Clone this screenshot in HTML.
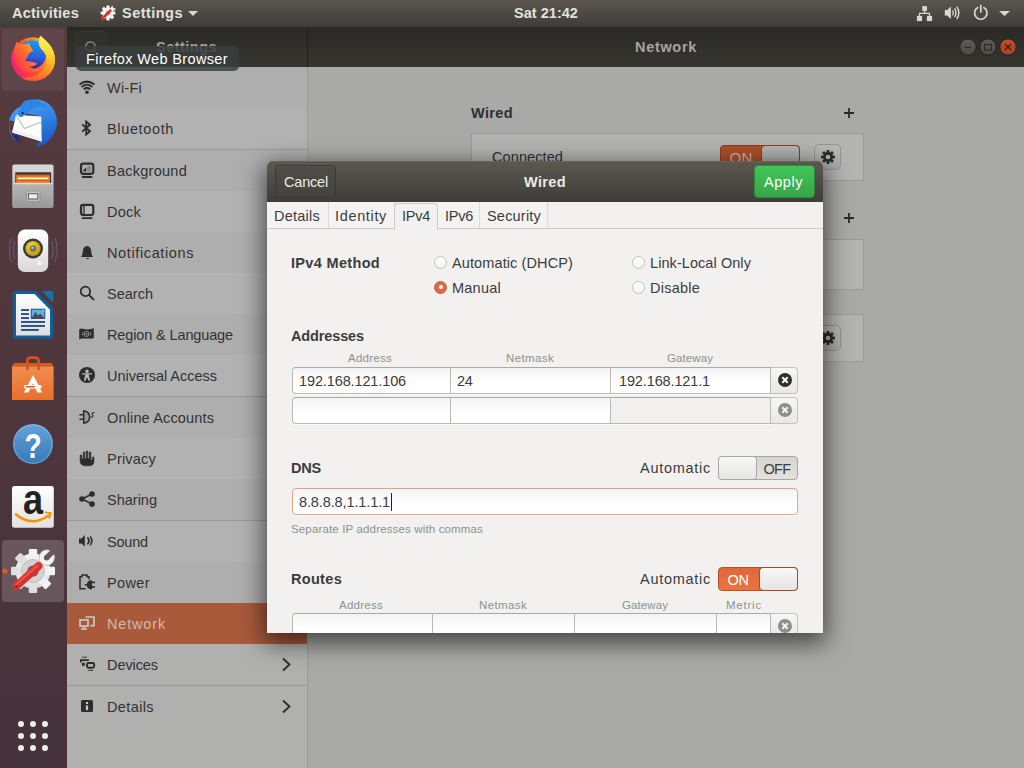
<!DOCTYPE html>
<html lang="en"><head>
<meta charset="utf-8">
<title>Settings - Network</title>
<style>
*{box-sizing:border-box;margin:0;padding:0}
html,body{width:1024px;height:768px;overflow:hidden;background:#a9a9a7;font-family:"Liberation Sans",sans-serif;font-size:14.5px;color:#3c3c3c}
.t{position:absolute;white-space:nowrap;line-height:20px;height:20px}
.b{font-weight:bold}
svg{position:absolute;overflow:visible}
/* top bar */
#topbar{position:absolute;left:0;top:0;width:1024px;height:27px;background:linear-gradient(#5a564d,#3e3d39);color:#e2e1dc;font-weight:bold}
#topbar .t{top:3px}
/* dock */
#dock{position:absolute;left:0;top:27px;width:67px;height:741px;background:linear-gradient(#563b3f,#45323a)}
.hl{position:absolute;left:2px;width:62px;height:62px;border-radius:4px}
/* main window */
#hdr{position:absolute;left:67px;top:27px;width:957px;height:40px;background:linear-gradient(#2a2925,#363530);color:#a6a59f;font-weight:bold}
#hdr .t{top:10px}
#side{position:absolute;left:67px;top:67px;width:240px;height:701px;background:#b0b0af}
#sideborder{position:absolute;left:307px;top:67px;width:1px;height:701px;background:#9c9c9a}
.row{position:absolute;left:0;width:240px;height:41px}
.row.l{background:#b2b2b2}
.row.d{background:#aeaeae}
.row .t{left:40px;top:11px;color:#323232}
.row svg{left:12px;top:12px;width:16px;height:16px}
.sep{position:absolute;left:0;width:240px;height:1px;background:#989896}
.row.sel{background:#a95a3b}
.row.sel .t{color:#d2b8ac}
/* content */
#content{position:absolute;left:308px;top:67px;width:716px;height:701px}
.card{position:absolute;left:163px;width:393px;border:1px solid #9a9a98;background:#b3b3b2}
.gearbtn{position:absolute;width:27px;height:26px;border:1px solid #939391;border-radius:5px;background:linear-gradient(#b8b8b7,#a9a9a8)}
/* tooltip */
#tip{position:absolute;left:76px;top:46px;width:163px;height:25px;border-radius:5px;background:rgba(57,62,62,.83);color:#fff}
/* dialog */
#dlg{position:absolute;left:267px;top:161px;width:556px;height:472px;background:#f2f1f0;border-radius:5px 5px 0 0;box-shadow:0 7px 24px 3px rgba(0,0,0,.6);overflow:hidden}
#dhdr{position:absolute;left:0;top:0;width:556px;height:41px;background:linear-gradient(#5b594f,#3e3d38);box-shadow:inset 0 1px #66645a;border-radius:5px 5px 0 0;color:#ecebe6}
.btn{position:absolute;top:4px;width:61px;height:33px;border-radius:4px}
#cancel{left:8px;border:1px solid #3a3934;background:linear-gradient(#4e4c45,#45433d);box-shadow:inset 0 1px rgba(255,255,255,.06)}
#apply{left:487px;border:1px solid #2f8a3d;background:linear-gradient(#40c657,#37a549)}
#tabs{position:absolute;left:0;top:41px;width:556px;height:27px;background:#f2f1f0;border-bottom:1px solid #cdccc9}
.tab{position:absolute;top:0;height:26px;border-right:1px solid #dddcd9;background:#f4f3f2}
.tab.act{top:1px;height:27px;background:#f2f1f0;border:1px solid #cdccc9;border-bottom:none;border-radius:4px 4px 0 0}
.tab .t{top:4px}
#dlg .t{color:#3c3c3c}
#dlg #dhdr .t{color:#ecebe6}
#dlg .h{color:#3c3c3c;font-weight:bold}
.radio{position:absolute;width:13px;height:13px;border-radius:50%;border:1px solid #c2c1bd;background:linear-gradient(#fff,#f3f3f2)}
.radio.on{border-color:#c4603c;background:#dc6a42}
.radio.on:after{content:"";position:absolute;left:3.5px;top:3.5px;width:4px;height:4px;border-radius:50%;background:#fff}
.colh{position:absolute;font-size:11.5px;color:#8d918b;white-space:nowrap;line-height:14px;text-align:center}
.entry{position:absolute;height:27px;border:1px solid #b9b8b4;border-top-color:#a9a8a4;box-shadow:0 1px 0 #fbfbfb;background:linear-gradient(#f4f4f4,#fff 60%);}
.entry.dis{background:#f2f1f0}
.entry .t{top:3px;left:6px}
.del{position:absolute;width:27px;height:27px;border:1px solid #c3c2bf;border-left:none;border-radius:0 4px 4px 0;background:linear-gradient(#f6f6f5,#e9e8e6)}
.switch{position:absolute;width:80px;height:24px;border-radius:4px}

.switch.off{border:1px solid #a8a7a3;background:linear-gradient(#d6d5d2,#e3e2df)}
.switch.on{border:1px solid #b4502a;background:linear-gradient(#e0673a,#ec733f)}
.knob{position:absolute;top:-1px;width:39px;height:24px;border-radius:4px;border:1px solid #a8a7a3;background:linear-gradient(#f8f8f7,#e6e5e3)}
.switch.on .knob{border-color:#a4492a}
.entry.dns{border-color:#e8a387;background:linear-gradient(#f4f4f4,#fff 60%)}
.caret{position:absolute;left:98px;top:4px;width:1px;height:18px;background:#222}
</style>
</head>
<body>
<div id="topbar">
  <svg style="left:100px;top:5px;width:16px;height:16px" viewBox="-8 -8 16 16"><g fill="#f4f4f4"><circle r="5.6"></circle><rect x="-1.6" y="-7.4" width="3.2" height="14.8" rx=".6"></rect><rect x="-1.6" y="-7.4" width="3.2" height="14.8" rx=".6" transform="rotate(45)"></rect><rect x="-1.6" y="-7.4" width="3.2" height="14.8" rx=".6" transform="rotate(90)"></rect><rect x="-1.6" y="-7.4" width="3.2" height="14.8" rx=".6" transform="rotate(135)"></rect></g><circle r="2" fill="#777"></circle><path d="M-6 6L2.5 -2.5" stroke="#d8302a" stroke-width="2.6" stroke-linecap="round"></path><path d="M3 -3.2C2.2 -5 3.2 -6.8 5 -7L4.8 -5L6 -4.2L7.4 -5C7.8 -3.4 6.4 -2 4.6 -2.2Z" fill="#fff" stroke="#aaa" stroke-width=".3"></path></svg>
  <svg style="left:188px;top:11px;width:10px;height:5px" viewBox="0 0 10 5"><path d="M0 0H10L5 5Z" fill="#d8d7d3"></path></svg>
  <svg style="left:916px;top:5px;width:17px;height:17px" viewBox="916 5 17 17"><g fill="#d8d7d3"><rect x="922.2" y="6.1" width="4.8" height="4.8"></rect><rect x="916.9" y="15.9" width="5.2" height="5.2"></rect><rect x="926.9" y="15.9" width="5.2" height="5.2"></rect></g><path d="M924.6 10.9V13.4M919.5 15.9V13.4H929.5V15.9" fill="none" stroke="#d8d7d3" stroke-width="1.2"></path></svg>
  <svg style="left:944px;top:5px;width:17px;height:17px" viewBox="944 5 17 17"><path d="M944.8 10H947.2L950.9 6.6V19L947.2 15.6H944.8Z" fill="#d8d7d3"></path><path d="M952.6 10.2Q954 12.8 952.6 15.4" fill="none" stroke="#d8d7d3" stroke-width="1.3"></path><path d="M954.6 8.4Q957.2 12.8 954.6 17.2" fill="none" stroke="#d8d7d3" stroke-width="1.4"></path><path d="M956.8 6.6Q960.8 12.8 956.8 19" fill="none" stroke="#d8d7d3" stroke-width="1.5"></path></svg>
  <svg style="left:973px;top:4px;width:17px;height:18px" viewBox="973 4 17 18"><path d="M977.8 7.6A6.2 6.2 0 1 0 983.8 7.6" fill="none" stroke="#d8d7d3" stroke-width="1.7" stroke-linecap="round"></path><path d="M980.8 5.4V12" stroke="#d8d7d3" stroke-width="1.7" stroke-linecap="round"></path></svg>
  <svg style="left:999px;top:11px;width:11px;height:5px" viewBox="0 0 11 5"><path d="M0 0H11L5.5 5Z" fill="#d8d7d3"></path></svg>

  <span class="t" style="left: 12px; letter-spacing: 0.25px;">Activities</span>
  <span class="t" style="left: 122px; letter-spacing: 0.47px;">Settings</span>
  <span class="t" style="left: 514px; letter-spacing: 0.03px;">Sat 21:42</span>
</div>
<div id="dock">
<div class="hl" style="top:1.5px;background:rgba(255,255,255,.06)"></div>
<div class="hl" style="top:513px;background:rgba(255,255,255,.17)"></div>
<svg style="left:0;top:0;width:67px;height:741px" viewBox="0 27 67 741">
<defs>
<linearGradient id="ffb" gradientUnits="userSpaceOnUse" x1="53" y1="48" x2="12" y2="68"><stop offset="0" stop-color="#ffc02a"></stop><stop offset=".3" stop-color="#ff8a22"></stop><stop offset=".58" stop-color="#ff4a30"></stop><stop offset=".85" stop-color="#ff2d58"></stop><stop offset="1" stop-color="#e8208a"></stop></linearGradient>
<linearGradient id="ffg" x1=".5" y1="0" x2=".4" y2="1"><stop offset="0" stop-color="#1a9bf0"></stop><stop offset=".55" stop-color="#2a62e0"></stop><stop offset="1" stop-color="#3a1f9e"></stop></linearGradient>
<linearGradient id="fff" gradientUnits="userSpaceOnUse" x1="46" y1="36" x2="40" y2="81"><stop offset="0" stop-color="#fff56e"></stop><stop offset=".4" stop-color="#ffd42e"></stop><stop offset=".72" stop-color="#ff9c20"></stop><stop offset="1" stop-color="#ff5a2c"></stop></linearGradient><linearGradient id="ffh" gradientUnits="userSpaceOnUse" x1="13" y1="60" x2="34" y2="46"><stop offset="0" stop-color="#ff3850"></stop><stop offset=".5" stop-color="#ff6a2c"></stop><stop offset="1" stop-color="#ffa62a"></stop></linearGradient>

<linearGradient id="tbb" x1=".3" y1="0" x2=".7" y2="1"><stop offset="0" stop-color="#4ba4f2"></stop><stop offset=".6" stop-color="#2b7adf"></stop><stop offset="1" stop-color="#1f56ba"></stop></linearGradient>
<linearGradient id="gr1" x1="0" y1="0" x2="0" y2="1"><stop offset="0" stop-color="#dcdcdc"></stop><stop offset="1" stop-color="#a0a0a0"></stop></linearGradient>
<linearGradient id="gr2" x1="0" y1="0" x2="0" y2="1"><stop offset="0" stop-color="#b6b6b6"></stop><stop offset="1" stop-color="#989898"></stop></linearGradient>
<linearGradient id="rb" x1="0" y1="0" x2="0" y2="1"><stop offset="0" stop-color="#ffffff"></stop><stop offset="1" stop-color="#d8d8d8"></stop></linearGradient>
<radialGradient id="rby" cx=".4" cy=".35" r=".7"><stop offset="0" stop-color="#f0d838"></stop><stop offset="1" stop-color="#b8960e"></stop></radialGradient>
<linearGradient id="lo" x1="0" y1="0" x2="0" y2="1"><stop offset="0" stop-color="#ffffff"></stop><stop offset="1" stop-color="#dedede"></stop></linearGradient>
<linearGradient id="us" x1="0" y1="0" x2="0" y2="1"><stop offset="0" stop-color="#f28d50"></stop><stop offset="1" stop-color="#e8702c"></stop></linearGradient>
<linearGradient id="hp" x1="0" y1="0" x2="0" y2="1"><stop offset="0" stop-color="#64a2da"></stop><stop offset="1" stop-color="#3779b6"></stop></linearGradient>
<linearGradient id="am" x1="0" y1="0" x2="0" y2="1"><stop offset="0" stop-color="#ffffff"></stop><stop offset="1" stop-color="#e2e2e2"></stop></linearGradient>
<linearGradient id="gw" x1="0" y1="0" x2="0" y2="1"><stop offset="0" stop-color="#f6f6f6"></stop><stop offset="1" stop-color="#dcdcdc"></stop></linearGradient>
<linearGradient id="wr" x1="0" y1="0" x2="1" y2="1"><stop offset="0" stop-color="#f0483c"></stop><stop offset="1" stop-color="#c8201e"></stop></linearGradient>
<linearGradient id="cl" x1="0" y1="0" x2="0" y2="1"><stop offset="0" stop-color="#c24d2d"></stop><stop offset="1" stop-color="#a64026"></stop></linearGradient><linearGradient id="mn" x1="0" y1="0" x2="0" y2="1"><stop offset="0" stop-color="#5c5b55"></stop><stop offset="1" stop-color="#4c4b46"></stop></linearGradient></defs>
<!-- firefox -->
<g>
<circle cx="33" cy="59" r="21.8" fill="url(#ffb)"></circle>
<circle cx="32" cy="54.4" r="14.2" fill="url(#ffg)"></circle>
<path d="M16.6 41.4C18.5 43.5 21 44.4 24 44.2C26 44 28 43.6 29.4 43.6C29.6 45.6 31 47.6 33.2 50.6L28.6 53.4C28.4 55 27.8 56.8 26.4 58.2C25.6 59.4 25.4 60.6 25.8 61.6C29 60.8 33 61.6 37.2 63.8C35 65.8 32.5 67 29.5 66.6C32 68.8 36 70 40.5 69C34 74 24 73 18 67C13 61 13 50 16.6 41.4Z" fill="url(#ffh)"></path>
<path d="M40.3 35.8C46 40 55.6 48 55 61.5C54.4 72 45 81 33 80.8C28 80.8 24 79.5 21 77.5C30 79 41 75 45.5 66C48 60 46.5 54.5 42.5 50.5C39 47 37 42 40.3 35.8Z" fill="url(#fff)"></path>
</g>
<!-- thunderbird -->
<g>
<path d="M20.5 106.5C27 98 41 97 49.5 104.5C58.5 112.5 59.5 127 52 137C48 142.5 42 146.5 35 146.8C38 144.5 40.5 141.5 41.5 138L41.6 116.6L24 113C21.5 116 17 117 15.5 121C11 122 9 118 9.2 123C9.5 132 12 138 17 142.5C11 138.5 8.5 131 9 122C9.5 115.5 14 109.5 20.5 106.5Z" fill="url(#tbb)"></path>
<path d="M16 114.8L41.4 116.6L41.6 141.4L12.2 132.4Z" fill="#fdfdfd"></path>
<path d="M16 115L24.5 128.5L41.5 122" fill="none" stroke="#9a9a9a" stroke-width=".8"></path>
<path d="M12.2 132.4L41.6 141.4L41.6 137.5L12.8 129.5Z" fill="#efeff3"></path>
<path d="M13 134C14.5 138.5 17.5 141.5 21 143.5C19.5 141 18.8 138.5 18.6 135.8Z" fill="#1b2f8c"></path>
<path d="M24.5 101C32 98 44 100 50 110C46 106 40 105 35.5 107.5C30 110.5 27 113.5 22.5 116.5C19.5 118.5 17.5 115.5 18.5 112C19.5 108 21.5 103.5 24.5 101Z" fill="#2c86e6"></path>
<circle cx="22.6" cy="113.2" r="1.1" fill="#1a1a2a"></circle>
</g>
<!-- files -->
<g>
<rect x="12.3" y="164.6" width="41.2" height="43.4" rx="2" fill="url(#gr1)"></rect>
<rect x="13.3" y="165.4" width="39.2" height="5.6" rx="1.5" fill="#d6d6d6"></rect>
<rect x="15.3" y="172.3" width="35.8" height="11" fill="#353535"></rect>
<rect x="16.2" y="174.8" width="33.8" height="8.5" fill="#f08a2c"></rect>
<rect x="16.2" y="174.8" width="33.8" height="1.8" fill="#e0661a"></rect>
<rect x="18" y="177.6" width="30" height="1.5" fill="#fff3e0"></rect>
<rect x="16.2" y="180" width="33.8" height="1.2" fill="#d85a18"></rect>
<rect x="13.8" y="183" width="38.4" height="25" rx="1" fill="url(#gr2)"></rect>
<rect x="13.8" y="183" width="38.4" height="1.2" fill="#dedede"></rect>
<rect x="26.3" y="191" width="13.6" height="10.4" rx="1.6" fill="#c6c6c6" stroke="#8c8c8c" stroke-width=".8"></rect>
<rect x="28.4" y="193.8" width="9.4" height="5.2" fill="#eeeeee" stroke="#4a4a4a" stroke-width=".9"></rect>
</g>
<!-- rhythmbox -->
<g>
<path d="M11.5 238Q7.5 249 11.5 262M55 238Q59 249 55 262M14.8 241Q12 249 14.8 259M51.6 241Q54.4 249 51.6 259" fill="none" stroke="#8090c0" stroke-opacity=".35" stroke-width="1.3"></path>
<rect x="17.8" y="229.6" width="30.4" height="42.4" rx="7" fill="url(#rb)"></rect>
<circle cx="33" cy="248.5" r="10" fill="#3a3a34"></circle>
<circle cx="33" cy="248.5" r="7.6" fill="url(#rby)"></circle>
<circle cx="33" cy="248.5" r="3.2" fill="#70706c"></circle>
<circle cx="32.4" cy="247.8" r="1.3" fill="#bdbdbd"></circle>
<circle cx="39.5" cy="263" r="3" fill="#f4f4f4" stroke="#d0d0d0" stroke-width=".7"></circle>
</g>
<!-- libreoffice writer -->
<g>
<path d="M14.8 290.9H36L53.1 308.5V336.7Q53.1 338.7 51.1 338.7H14.8Q12.8 338.7 12.8 336.7V292.9Q12.8 290.9 14.8 290.9Z" fill="#0f6096"></path>
<path d="M16 294H34.6L50 309.8V335.6H16Z" fill="url(#lo)"></path>
<path d="M41.6 290.9H51.5Q53.1 290.9 53.1 292.5V302.8Z" fill="#1a6fa8"></path>
<g fill="#0c3f7c"><rect x="21" y="309.2" width="8" height="1.7"></rect><rect x="21" y="313.2" width="8" height="1.7"></rect><rect x="21" y="317.2" width="8" height="1.7"></rect><rect x="21" y="321.1" width="24" height="1.7"></rect><rect x="21" y="325.1" width="24" height="1.7"></rect><rect x="21" y="329.1" width="17.8" height="1.7"></rect></g>
<rect x="31.2" y="309.2" width="13.6" height="9.2" fill="#5cb2e8" stroke="#0c3f7c" stroke-width=".9"></rect>
<path d="M31.8 317.9L35.5 312L38 315.5L40.5 313.8L44.2 317.9Z" fill="#4e4a48"></path>
<path d="M42 309.7H44.3V312Z" fill="#f2c81e"></path>
</g>
<!-- ubuntu software -->
<g>
<path d="M14 363H51.6L53.6 366.6H12Z" fill="#d65c1c"></path>
<rect x="12" y="366.4" width="41.6" height="33.6" fill="url(#us)"></rect>
<path d="M27.4 370V361.2Q27.4 357.6 31 357.6H35Q38.6 357.6 38.6 361.2V370" fill="none" stroke="#d8521c" stroke-width="2.6"></path>
<path d="M33.2 375L42 392.5H37.3L33.2 383.2L28.2 392.5H23.9Z" fill="#fff"></path>
<rect x="23.8" y="385" width="18" height="3.6" rx="1.8" fill="#fff"></rect>
<rect x="25.3" y="386.1" width="10" height="1.4" rx=".7" fill="#e8601e"></rect>
</g>
<!-- help -->
<g>
<circle cx="33" cy="444" r="20" fill="url(#hp)"></circle>
<circle cx="33" cy="444" r="19.2" fill="none" stroke="#fff" stroke-opacity=".22" stroke-width="1.2"></circle>
<text transform="translate(33 458.2) scale(.8 1)" text-anchor="middle" font-family="Liberation Sans, sans-serif" font-weight="bold" font-size="35" fill="#fff">?</text>
</g>
<!-- amazon -->
<g>
<rect x="12" y="486" width="41.8" height="41.8" rx="2.5" fill="url(#am)"></rect>
<text transform="translate(33 514.3) scale(.86 1)" text-anchor="middle" font-family="Liberation Sans, sans-serif" font-weight="bold" font-size="42" fill="#222">a</text>
<path d="M16 514.5Q32 527.5 48.5 515.5" fill="none" stroke="#f69400" stroke-width="2.6" stroke-linecap="round"></path>
<path d="M45 512.3L51 513.2L49 518.6" fill="none" stroke="#f69400" stroke-width="1.8" stroke-linejoin="round"></path>
</g>
<!-- settings -->
<g>
<circle cx="5" cy="571" r="2.6" fill="#f0541e"></circle>
<g transform="translate(33 571)">
<g fill="url(#gw)"><circle r="17.6"></circle><rect x="-4.2" y="-22" width="8.4" height="44" rx="1.2"></rect><rect x="-4.2" y="-22" width="8.4" height="44" rx="1.2" transform="rotate(45)"></rect><rect x="-4.2" y="-22" width="8.4" height="44" rx="1.2" transform="rotate(90)"></rect><rect x="-4.2" y="-22" width="8.4" height="44" rx="1.2" transform="rotate(135)"></rect></g>
<circle r="11.5" fill="#d2d2d2"></circle><circle r="11.5" fill="none" stroke="#c0c0c0" stroke-width="1"></circle>
<circle r="5.6" fill="#6b5a5c"></circle>
</g>
<path d="M38 566.5L43.5 561.5" stroke="#e6e6e6" stroke-width="5" stroke-linecap="round"></path>
<circle cx="46.8" cy="557.6" r="7.8" fill="#f3f3f3" stroke="#a8a8a8" stroke-width=".7"></circle>
<path d="M46.2 558.2L52.8 551.6" stroke="#6a595b" stroke-width="5.4"></path>
<circle cx="46.6" cy="557.8" r="2.7" fill="#6a595b"></circle>
<path d="M16.4 586.2L38.5 566" stroke="url(#wr)" stroke-width="7.8" stroke-linecap="round"></path>
<path d="M15.6 585.2L37.5 565.4" stroke="#ff8a7a" stroke-opacity=".5" stroke-width="1.4" stroke-linecap="round"></path>
<circle cx="16.3" cy="586.3" r="1.2" fill="#8a2020"></circle>
</g>
<!-- apps grid -->
<g fill="#eeeeec"><circle cx="21" cy="724" r="3"></circle><circle cx="33" cy="724" r="3"></circle><circle cx="45" cy="724" r="3"></circle><circle cx="21" cy="736" r="3"></circle><circle cx="33" cy="736" r="3"></circle><circle cx="45" cy="736" r="3"></circle><circle cx="21" cy="748" r="3"></circle><circle cx="33" cy="748" r="3"></circle><circle cx="45" cy="748" r="3"></circle></g>
</svg>
</div>
<div id="hdr">
  <div style="position:absolute;left:8px;top:4px;width:32px;height:32px;border:1px solid #383732;border-radius:4px;background:linear-gradient(#302f2b,#33322e)"></div>
  <svg style="left:16.5px;top:13px;width:16px;height:16px" viewBox="0 0 16 16"><circle cx="6.4" cy="6.4" r="4.6" fill="none" stroke="#7b7a75" stroke-width="1.8"></circle><path d="M9.9 9.9L14.4 14.4" stroke="#7b7a75" stroke-width="2" stroke-linecap="round"></path></svg>
  <div style="position:absolute;left:240px;top:0;width:1px;height:40px;background:#1f1e1b"></div>
  <svg style="left:892px;top:11px;width:58px;height:18px" viewBox="0 0 58 18">
    <circle cx="9" cy="9" r="8.2" fill="url(#mn)" stroke="#22211e" stroke-width="1"></circle><path d="M5.5 9.5H12.5" stroke="#2b2a27" stroke-width="1.1"></path>
    <circle cx="29" cy="9" r="8.2" fill="url(#mn)" stroke="#22211e" stroke-width="1"></circle><rect x="25.5" y="6.5" width="7" height="5.5" fill="none" stroke="#2b2a27" stroke-width="1.1"></rect>
    <circle cx="49" cy="9" r="8.2" fill="url(#cl)" stroke="#22211e" stroke-width="1"></circle><path d="M46 6L52 12M52 6L46 12" stroke="#3a1a10" stroke-width="1.1"></path>
  </svg>

  <span class="t" style="left: 89px; letter-spacing: 0.47px;">Settings</span>
  <span class="t" style="left: 568px; letter-spacing: 0.68px;">Network</span>
</div>
<div id="side">
<div class="row d" style="top:0px"><svg viewBox="0 0 16 16"><g fill="none" stroke="#2d2d2d" stroke-width="2.1" stroke-linecap="round"><path d="M1.31 5.03A10.4 10.4 0 0 1 14.69 5.03"></path><path d="M3.37 7.48A7.2 7.2 0 0 1 12.63 7.48"></path><path d="M5.43 9.94A4 4 0 0 1 10.57 9.94"></path></g><circle cx="8" cy="13.2" r="1.8" fill="#2d2d2d"></circle></svg><span class="t" style="letter-spacing: 0.23px;">Wi-Fi</span></div>
<div class="row l" style="top:41px"><svg viewBox="0 0 16 16"><path d="M3.2 4.4L11 11.2L7.2 14.4V1.6L11 4.8L3.2 11.6" fill="none" stroke="#2d2d2d" stroke-width="1.9" stroke-linejoin="miter"></path></svg><span class="t" style="letter-spacing: 0.64px;">Bluetooth</span></div>
<div class="row d" style="top:83px"><svg viewBox="0 0 16 16"><rect x="2" y="1.7" width="12.3" height="10.1" rx="2.2" fill="none" stroke="#2d2d2d" stroke-width="2.2"></rect><rect x="8.3" y="4" width="3.6" height="5.6" fill="#8a8a8a"></rect><path d="M4.5 9.6V8L7.3 5.2V9.6Z" fill="#2d2d2d"></path><path d="M3.6 15H12.6" stroke="#2d2d2d" stroke-width="1.8" stroke-linecap="round"></path></svg><span class="t" style="letter-spacing: 0.26px;">Background</span></div>
<div class="row l" style="top:124px"><svg viewBox="0 0 16 16"><rect x="5" y="3" width="8" height="7.5" fill="#b9b9b8"></rect><rect x="2" y="1.9" width="12.3" height="10.1" rx="2.2" fill="none" stroke="#2d2d2d" stroke-width="2.2"></rect><path d="M5 3V11" stroke="#2d2d2d" stroke-width="1.3"></path><path d="M3.6 15.2H12.6" stroke="#2d2d2d" stroke-width="1.8" stroke-linecap="round"></path></svg><span class="t" style="letter-spacing: 0.24px;">Dock</span></div>
<div class="row d" style="top:165px"><svg viewBox="0 0 16 16"><path d="M2 13H14C12.5 11.3 12.4 9 12.1 6.5C11.7 3.5 10 2 8 2C6 2 4.3 3.5 3.9 6.5C3.6 9 3.5 11.3 2 13Z" fill="#2d2d2d"></path><ellipse cx="8.6" cy="14.4" rx="1.4" ry=".7" fill="#2d2d2d"></ellipse></svg><span class="t" style="letter-spacing: 0.62px;">Notifications</span></div>
<div class="row l" style="top:206px"><svg viewBox="0 0 16 16"><circle cx="6.4" cy="6.4" r="4.7" fill="none" stroke="#2d2d2d" stroke-width="1.8"></circle><path d="M9.9 9.9L14.4 14.4" stroke="#2d2d2d" stroke-width="2" stroke-linecap="round"></path></svg><span class="t" style="letter-spacing: 0.01px;">Search</span></div>
<div class="row d" style="top:247px"><svg viewBox="0 0 16 16"><path d="M.2 3.2C3 1.6 5 3.8 8 3.5C11 3.2 12.5 3.5 14.8 2.1V12C12.5 13.3 10.5 12.3 8 12.6C5 12.9 3 11.9 .2 13.6Z" fill="#2d2d2d"></path><circle cx="7.5" cy="7.9" r="2.5" fill="none" stroke="#a5a5a5" stroke-width=".9"></circle><circle cx="7.5" cy="7.9" r=".9" fill="#a5a5a5"></circle><path d="M3.6 6.5Q3 7.9 3.6 9.3M11.4 6.5Q12 7.9 11.4 9.3" fill="none" stroke="#a5a5a5" stroke-width=".8"></path></svg><span class="t" style="letter-spacing: -0.13px;">Region &amp; Language</span></div>
<div class="row l" style="top:288px"><svg viewBox="0 0 16 16"><circle cx="8" cy="8" r="8" fill="#2d2d2d"></circle><circle cx="8" cy="4.2" r="1.7" fill="#b8b8b8"></circle><path d="M3 6.3H13V7.6H9.6L11.2 13.4L9.8 13.9L8 10.2L6.2 13.9L4.8 13.4L6.4 7.6H3Z" fill="#b8b8b8"></path></svg><span class="t" style="letter-spacing: -0.03px;">Universal Access</span></div>
<div class="row d" style="top:330px"><svg viewBox="0 0 16 16"><path d="M4.7 1.7V14.3C9 13.5 10.6 10.6 10.6 8C10.6 5.4 9 2.5 4.7 1.7Z" fill="#999" stroke="#2d2d2d" stroke-width="1.5" stroke-linejoin="round"></path><path d="M.4 5.7H4.2M.4 10.3H4.2" stroke="#2d2d2d" stroke-width="1.6"></path><path d="M15.4 3.6C13.2 3 12.5 4.6 13.6 5.8C14.8 7 14 8.8 11 8" fill="none" stroke="#2d2d2d" stroke-width="1.1"></path></svg><span class="t" style="letter-spacing: 0.15px;">Online Accounts</span></div>
<div class="row l" style="top:371px"><svg viewBox="0 0 16 16"><path d="M1.1 5V11C1.1 14 3 15.8 6 15.8H10.5C13.5 15.8 15 14 15 11.5V7H13.4V10H11.9V2H10.2V8.6H8.8V1H7.2V8.6H5.8V2H4.2V8.8H2.8V5Z" fill="#2d2d2d" stroke="#2d2d2d" stroke-width=".5" stroke-linejoin="round"></path></svg><span class="t" style="letter-spacing: 0.21px;">Privacy</span></div>
<div class="row d" style="top:412px"><svg viewBox="0 0 16 16"><path d="M13 3L3 8L13 13" fill="none" stroke="#2d2d2d" stroke-width="1.5"></path><circle cx="3" cy="8" r="2.8" fill="#2d2d2d"></circle><circle cx="13" cy="3" r="2.8" fill="#2d2d2d"></circle><circle cx="13" cy="13.1" r="2.8" fill="#2d2d2d"></circle></svg><span class="t" style="letter-spacing: 0px;">Sharing</span></div>
<div class="row l" style="top:454px"><svg viewBox="0 0 16 16"><path d="M0 5.6H2.5L5.8 2V13.6L2.5 10.4H0Z" fill="#2d2d2d"></path><path d="M8.9 4.8Q11 7.8 8.9 10.8" fill="none" stroke="#2d2d2d" stroke-width="1.7" stroke-linecap="round"></path><path d="M11.3 3Q15.4 7.8 11.3 12.6Q13.4 7.8 11.3 3Z" fill="#2d2d2d" stroke="#2d2d2d" stroke-width=".8" stroke-linejoin="round"></path></svg><span class="t" style="letter-spacing: -0.19px;">Sound</span></div>
<div class="row d" style="top:495px"><svg viewBox="0 0 16 16"><path d="M10 5.5V2.7H8V1H3V2.7H1V14.8H6.6" fill="none" stroke="#2d2d2d" stroke-width="1.5"></path><path d="M13 6.2V15.4C9 15.4 7.8 13 7.8 10.8C7.8 8.6 9 6.2 13 6.2Z" fill="#2d2d2d"></path><path d="M13 8.4H15.9M13 12.9H15.9M5.8 10.8H8" stroke="#2d2d2d" stroke-width="1.6"></path></svg><span class="t" style="letter-spacing: 0.38px;">Power</span></div>
<div class="row sel" style="top:536px"><svg viewBox="0 0 16 16"><path d="M6.6 2H15V10.6H11.4" fill="none" stroke="#c9c9c9" stroke-width="1.7"></path><rect x="1" y="4.9" width="8" height="6.2" fill="#a95a3b" stroke="#c9c9c9" stroke-width="1.7"></rect><path d="M3.2 12.6H6.8L8.2 14.8H1.8Z" fill="#c9c9c9"></path></svg><span class="t" style="letter-spacing: 0.83px;">Network</span></div>
<div class="row" style="top:577px"><svg viewBox="0 0 16 16"><path d="M3 1.2H8" stroke="#2d2d2d" stroke-width=".9"></path><path d="M1.1 4.1H9.9M1.8 4.1V6.6" stroke="#2d2d2d" stroke-width="1.6"></path><rect x="3" y="6.8" width="2.8" height="3.1" fill="#2d2d2d"></rect><rect x="8" y="7" width="7.2" height="4.8" rx="1.5" fill="none" stroke="#2d2d2d" stroke-width="1.9"></rect><path d="M9.2 14.4H14" stroke="#2d2d2d" stroke-width=".9"></path></svg><span class="t" style="letter-spacing: -0.08px;">Devices</span><svg style="left:214px;top:13px;width:12px;height:15px" viewBox="0 0 12 15"><path d="M2 1.5L8.5 7.5L2 13.5" fill="none" stroke="#2d2d2d" stroke-width="1.8"></path></svg></div>
<div class="row" style="top:619px"><svg viewBox="0 0 16 16"><rect x="2" y="2" width="12" height="12" rx="1.5" fill="#2d2d2d"></rect><rect x="7" y="4" width="2" height="2" fill="#c8c8c8"></rect><rect x="6.9" y="7.4" width="2.2" height="4.7" fill="#c8c8c8"></rect></svg><span class="t" style="letter-spacing: 0.38px;">Details</span><svg style="left:214px;top:13px;width:12px;height:15px" viewBox="0 0 12 15"><path d="M2 1.5L8.5 7.5L2 13.5" fill="none" stroke="#2d2d2d" stroke-width="1.8"></path></svg></div>
<div class="sep" style="top:82px"></div>
<div class="sep" style="top:329px"></div>
<div class="sep" style="top:453px"></div>
<div class="sep" style="top:618px"></div>
</div>
<div id="sideborder"></div>
<div id="content">
<span class="t b" style="left: 163px; top: 36px; color: rgb(47, 47, 47); letter-spacing: 0.37px;">Wired</span>
<svg style="left:536px;top:41px;width:10px;height:10px" viewBox="0 0 10 10"><path d="M5 0V10M0 5H10" stroke="#2a2a2a" stroke-width="1.8"></path></svg>
<div class="card" style="top:66px;height:48px"></div>
<span class="t" style="left: 184px; top: 80px; color: rgb(47, 47, 47); letter-spacing: 0.1px;">Connected</span>
<div class="switch" style="left:412px;top:78px;border:1px solid #8a3e22;background:#ae4f2a"><span class="t" style="left: 8.5px; top: 2px; color: rgb(203, 181, 170); font-size: 15px; letter-spacing: 0.25px;">ON</span><div class="knob" style="left:40px;border-color:#8c3f22;background:linear-gradient(#b4b4b3,#a6a6a5)"></div></div>
<div class="gearbtn" style="left:506px;top:77px"><svg style="left:5.5px;top:4.5px;width:14px;height:14px" viewBox="-7 -7 14 14"><g fill="#2b2b2b"><circle r="5"></circle><rect x="-1.35" y="-7" width="2.7" height="14"></rect><rect x="-1.35" y="-7" width="2.7" height="14" transform="rotate(45)"></rect><rect x="-1.35" y="-7" width="2.7" height="14" transform="rotate(90)"></rect><rect x="-1.35" y="-7" width="2.7" height="14" transform="rotate(135)"></rect></g><circle r="2.3" fill="#b0b0af"></circle></svg></div>
<svg style="left:536px;top:146px;width:10px;height:10px" viewBox="0 0 10 10"><path d="M5 0V10M0 5H10" stroke="#2a2a2a" stroke-width="1.8"></path></svg>
<div class="card" style="top:172px;height:51px"></div>
<div class="card" style="top:247px;height:48px"></div>
<div class="gearbtn" style="left:506px;top:258px"><svg style="left:5.5px;top:4.5px;width:14px;height:14px" viewBox="-7 -7 14 14"><g fill="#2b2b2b"><circle r="5"></circle><rect x="-1.35" y="-7" width="2.7" height="14"></rect><rect x="-1.35" y="-7" width="2.7" height="14" transform="rotate(45)"></rect><rect x="-1.35" y="-7" width="2.7" height="14" transform="rotate(90)"></rect><rect x="-1.35" y="-7" width="2.7" height="14" transform="rotate(135)"></rect></g><circle r="2.3" fill="#b0b0af"></circle></svg></div>
</div>
<div id="tip"><span class="t" style="left: 10px; top: 3px; letter-spacing: 0.36px;">Firefox Web Browser</span></div>
<div id="dlg">
<div id="dhdr">
  <div class="btn" id="cancel"></div>
  <span class="t" style="left: 17px; top: 11px; letter-spacing: -0.19px;">Cancel</span>
  <span class="t b" style="left: 257px; top: 11px; letter-spacing: 0.37px;">Wired</span>
  <div class="btn" id="apply"></div>
  <span class="t" style="left: 497px; top: 11px; color: rgb(255, 255, 255); letter-spacing: 0.54px;">Apply</span>
</div>
<div id="tabs">
  <div class="tab" style="left:0;width:62px"><span class="t" style="left: 7px; letter-spacing: 0.24px;">Details</span></div>
  <div class="tab" style="left:62px;width:66px"><span class="t" style="left: 6px; letter-spacing: 0.66px;">Identity</span></div>
  <div class="tab" style="left:171px;width:42px"><span class="t" style="left: 7px; letter-spacing: -0.25px;">IPv6</span></div>
  <div class="tab" style="left:213px;width:68px"><span class="t" style="left: 7px; letter-spacing: 0.2px;">Security</span></div>
  <div class="tab act" style="left:127px;width:44px"><span class="t" style="left: 7px; top: 2px; letter-spacing: -0.25px;">IPv4</span></div>
</div>
<span class="t h" style="left: 24px; top: 92px; letter-spacing: 0.33px;">IPv4 Method</span>
<div class="radio" style="left:167px;top:94.5px"></div>
<div class="radio on" style="left:167px;top:119.5px"></div>
<div class="radio" style="left:365px;top:94.5px"></div>
<div class="radio" style="left:365px;top:119.5px"></div>
<span class="t" style="left: 185px; top: 92px; letter-spacing: 0.11px;">Automatic (DHCP)</span>
<span class="t" style="left: 185px; top: 117px; letter-spacing: 0.24px;">Manual</span>
<span class="t" style="left: 383px; top: 92px; letter-spacing: 0.07px;">Link-Local Only</span>
<span class="t" style="left: 383px; top: 117px; letter-spacing: 0.23px;">Disable</span>
<span class="t h" style="left: 24px; top: 165px; letter-spacing: -0.13px;">Addresses</span>
<span class="colh" style="left: 81px; top: 190px; letter-spacing: 0.26px;">Address</span>
<span class="colh" style="left: 239px; top: 190px; letter-spacing: 0.38px;">Netmask</span>
<span class="colh" style="left: 400px; top: 190px; letter-spacing: 0.09px;">Gateway</span>
<div class="entry" style="left:25px;top:206px;width:159px;border-radius:4px 0 0 4px"><span class="t" style="letter-spacing: -0.12px;">192.168.121.106</span></div>
<div class="entry" style="left:183px;top:206px;width:161px"><span class="t" style="letter-spacing: -0.32px;">24</span></div>
<div class="entry" style="left:343px;top:206px;width:161px"><span class="t" style="left: 8px; letter-spacing: -0.13px;">192.168.121.1</span></div>
<div class="del" style="left:504px;top:206px"><svg style="left:7px;top:5px;width:14px;height:14px" viewBox="0 0 14 14"><circle cx="7" cy="7" r="7" fill="#2e2e2e"></circle><path d="M4.3 4.3L9.7 9.7M9.7 4.3L4.3 9.7" stroke="#fff" stroke-width="2"></path></svg></div>
<div class="entry" style="left:25px;top:236px;width:159px;border-radius:4px 0 0 4px"></div>
<div class="entry" style="left:183px;top:236px;width:161px"></div>
<div class="entry dis" style="left:343px;top:236px;width:161px"></div>
<div class="del" style="left:504px;top:236px"><svg style="left:7px;top:5px;width:14px;height:14px" viewBox="0 0 14 14"><circle cx="7" cy="7" r="7" fill="#8f8e8a"></circle><path d="M4.3 4.3L9.7 9.7M9.7 4.3L4.3 9.7" stroke="#f4f3f2" stroke-width="2"></path></svg></div>
<span class="t h" style="left: 24px; top: 297px; letter-spacing: -0.21px;">DNS</span>
<span class="t" style="left: 373px; top: 297px; letter-spacing: 0.72px;">Automatic</span>
<div class="switch off" style="left:451px;top:295px"><span class="t" style="left: 44.5px; top: 2px; letter-spacing: -0.67px;">OFF</span><div class="knob" style="left:-1px"></div></div>
<div class="entry dns" style="left:25px;top:327px;width:506px;border-radius:4px"><span class="t" style="letter-spacing: -0.11px;">8.8.8.8,1.1.1.1</span><div class="caret"></div></div>
<span class="colh" style="left: 24px; top: 361px; text-align: left; letter-spacing: 0.15px;">Separate IP addresses with commas</span>
<span class="t h" style="left: 24px; top: 408px; letter-spacing: 0.31px;">Routes</span>
<span class="t" style="left: 373px; top: 408px; letter-spacing: 0.72px;">Automatic</span>
<div class="switch on" style="left:451px;top:406px"><span class="t" style="left: 8.5px; top: 2px; color: rgb(255, 255, 255); letter-spacing: -0.37px;">ON</span><div class="knob" style="left:40px"></div></div>
<span class="colh" style="left: 72px; top: 437px; letter-spacing: 0.26px;">Address</span>
<span class="colh" style="left: 212px; top: 437px; letter-spacing: 0.38px;">Netmask</span>
<span class="colh" style="left: 355px; top: 437px; letter-spacing: 0.09px;">Gateway</span>
<span class="colh" style="left: 459px; top: 437px; letter-spacing: 0.78px;">Metric</span>
<div class="entry" style="left:25px;top:452px;width:141px;border-radius:4px 0 0 4px"></div>
<div class="entry" style="left:165px;top:452px;width:143px"></div>
<div class="entry" style="left:307px;top:452px;width:143px"></div>
<div class="entry" style="left:449px;top:452px;width:55px"></div>
<div class="del" style="left:504px;top:452px"><svg style="left:7px;top:5px;width:14px;height:14px" viewBox="0 0 14 14"><circle cx="7" cy="7" r="7" fill="#8f8e8a"></circle><path d="M4.3 4.3L9.7 9.7M9.7 4.3L4.3 9.7" stroke="#f4f3f2" stroke-width="2"></path></svg></div>
</div>


</body></html>
